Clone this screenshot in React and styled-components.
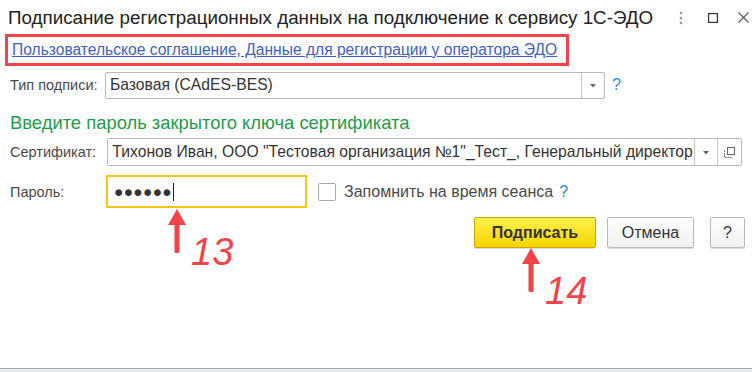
import React from "react";
import styled, { createGlobalStyle } from "styled-components";

const Global = createGlobalStyle`
  html, body { margin: 0; padding: 0; background: #fff; }
  body { font-family: "Liberation Sans", Arial, sans-serif; }
  * { box-sizing: border-box; }
`;

const Window = styled.div`
  position: relative;
  width: 752px;
  height: 372px;
  display: flex;
  flex-direction: column;
  background: #fff;
  overflow: hidden;
`;

const Header = styled.div`
  height: 32px;
  display: flex;
  align-items: center;
  padding: 3px 0 0 8px;
`;

const Title = styled.div`
  flex: 1;
  font-size: 18.8px;
  color: #222;
  white-space: nowrap;
`;

const HeaderIcon = styled.div`
  display: flex;
  align-items: center;
  margin-left: ${(p) => p.$ml}px;
`;

const HeaderIcons = styled.div`
  display: flex;
  align-items: center;
  padding-right: 3px;
`;

const LinkBox = styled.div`
  margin: 2px 0 0 5px;
  width: 564px;
  height: 32px;
  border: 3px solid #f2434b;
  display: flex;
  align-items: center;
  padding-left: 4px;
`;

const Link = styled.a`
  font-size: 15.6px;
  color: #3d5fc4;
  text-decoration: underline;
  white-space: nowrap;
`;

const Body = styled.div`
  display: flex;
  flex-direction: column;
  padding: 0 10px;
`;

const Row = styled.div`
  display: flex;
  align-items: center;
  margin-top: ${(p) => p.$mt || 0}px;
  height: ${(p) => p.$h || 28}px;
`;

const Label = styled.div`
  width: ${(p) => p.$w}px;
  font-size: 14.5px;
  color: #4a4a4a;
  white-space: nowrap;
`;

const Field = styled.div`
  width: ${(p) => p.$w}px;
  height: ${(p) => p.$h || 27}px;
  border: 1px solid #b9b9b9;
  border-radius: 2px;
  display: flex;
  align-items: stretch;
  background: #fff;
`;

const FieldText = styled.div`
  flex: 1;
  min-width: 0;
  display: flex;
  align-items: center;
  padding-left: 4px;
  font-size: 15.7px;
  color: #333;
  white-space: nowrap;
  overflow: hidden;
`;

const FieldButton = styled.div`
  width: ${(p) => p.$w || 23}px;
  flex: none;
  border-left: 1px solid #c8c8c8;
  display: flex;
  align-items: center;
  justify-content: center;
`;

const Help = styled.span`
  color: #2c87d0;
  font-size: 16px;
  margin-left: ${(p) => p.$ml || 7}px;
`;

const Heading = styled.div`
  margin-top: 14px;
  font-size: 18.4px;
  color: #1e9b4b;
  height: 20px;
  display: flex;
  align-items: center;
  white-space: nowrap;
`;

const Password = styled.div`
  width: 201px;
  height: 33px;
  border: 2px solid #f6c617;
  display: flex;
  align-items: center;
  padding-left: 6px;
  font-size: 15.5px;
  color: #333;
  letter-spacing: 0.3px;
`;

const Caret = styled.span`
  display: inline-block;
  width: 1px;
  height: 18px;
  background: #222;
  margin-left: 1px;
`;

const Checkbox = styled.div`
  width: 18px;
  height: 18px;
  border: 1px solid #aaa;
  border-radius: 2px;
  margin-left: 11px;
  background: #fff;
`;

const CheckLabel = styled.span`
  font-size: 16px;
  color: #4a4a4a;
  margin-left: 8px;
  white-space: nowrap;
`;

const Buttons = styled.div`
  display: flex;
  justify-content: flex-end;
  gap: 11px;
  margin-top: 9px;
  padding-right: 7px;
`;

const Button = styled.div`
  height: 31px;
  width: ${(p) => p.$w}px;
  border-radius: 2px;
  display: flex;
  align-items: center;
  justify-content: center;
  font-size: 16px;
  white-space: nowrap;
  color: #333;
  border: 1px solid ${(p) => (p.$primary ? "#c9a600" : "#b9b9b9")};
  background: ${(p) =>
    p.$primary
      ? "linear-gradient(#fff04f, #f4d400)"
      : "linear-gradient(#ffffff, #f0f0f0)"};
  font-weight: ${(p) => (p.$primary ? "bold" : "normal")};
  box-shadow: 0 1px 1px rgba(0, 0, 0, 0.15);
  margin-left: ${(p) => p.$ml || 0}px;
`;

const Spacer = styled.div`
  flex: 1;
`;

const Footer = styled.div`
  height: 4px;
  border-top: 1px solid #a4a4a4;
  background: #e6ebee;
`;

const Annotation = styled.div`
  position: absolute;
  left: ${(p) => p.$x}px;
  top: ${(p) => p.$y}px;
  display: flex;
  align-items: flex-start;
`;

const Number = styled.span`
  font-style: italic;
  font-size: 38px;
  color: #f2434b;
  line-height: 1;
  margin-top: 24px;
  margin-left: 4px;
`;

const Arrow = () => (
  <svg width="20" height="44" viewBox="0 0 20 44">
    <polygon points="10,0 19,16 1,16" fill="#f2434b" />
    <rect x="7.5" y="14" width="5" height="30" rx="1.5" fill="#f2434b" />
  </svg>
);

const DropArrow = () => (
  <svg width="8" height="5" viewBox="0 0 8 5">
    <polygon points="1,1 7,1 4,4.5" fill="#666" />
  </svg>
);

export default function App() {
  return (
    <>
      <Global />
      <Window>
        <Header>
          <Title>Подписание регистрационных данных на подключение к сервису 1С-ЭДО</Title>
          <HeaderIcons>
            <HeaderIcon $ml={0}>
              <svg width="4" height="14" viewBox="0 0 4 14">
                <circle cx="2" cy="2" r="1.3" fill="#999" />
                <circle cx="2" cy="7" r="1.3" fill="#999" />
                <circle cx="2" cy="12" r="1.3" fill="#999" />
              </svg>
            </HeaderIcon>
            <HeaderIcon $ml={25}>
              <svg width="10" height="10" viewBox="0 0 10 10">
                <rect x="0.6" y="0.6" width="8.8" height="8.8" fill="none" stroke="#333" strokeWidth="1.2" />
              </svg>
            </HeaderIcon>
            <HeaderIcon $ml={20}>
              <svg width="11" height="11" viewBox="0 0 11 11">
                <path d="M0.5 0.5 L10.5 10.5 M10.5 0.5 L0.5 10.5" stroke="#555" strokeWidth="1.2" />
              </svg>
            </HeaderIcon>
          </HeaderIcons>
        </Header>
        <LinkBox>
          <Link>Пользовательское соглашение, Данные для регистрации у оператора ЭДО</Link>
        </LinkBox>
        <Body>
          <Row $mt={5}>
            <Label $w={95}>Тип подписи:</Label>
            <Field $w={500}>
              <FieldText>Базовая (CAdES-BES)</FieldText>
              <FieldButton>
                <DropArrow />
              </FieldButton>
            </Field>
            <Help>?</Help>
          </Row>
          <Heading>Введите пароль закрытого ключа сертификата</Heading>
          <Row $mt={5}>
            <Label $w={98}>Сертификат:</Label>
            <Field $w={639} $h={28}>
              <FieldText>Тихонов Иван, ООО "Тестовая организация №1"_Тест_, Генеральный директор</FieldText>
              <FieldButton>
                <DropArrow />
              </FieldButton>
              <FieldButton $w={24}>
                <svg width="11" height="11" viewBox="0 0 11 11">
                  <rect x="3.5" y="0.5" width="7" height="7" fill="none" stroke="#666" strokeWidth="1" />
                  <path d="M0.5 3.5 V10.5 H7.5" fill="none" stroke="#666" strokeWidth="1" strokeDasharray="1.5 1" />
                </svg>
              </FieldButton>
            </Field>
          </Row>
          <Row $mt={9} $h={33}>
            <Label $w={96}>Пароль:</Label>
            <Password>
              ●●●●●●
              <Caret />
            </Password>
            <Checkbox />
            <CheckLabel>Запомнить на время сеанса</CheckLabel>
            <Help $ml={6}>?</Help>
          </Row>
        </Body>
        <Buttons>
          <Button $primary $w={122}>Подписать</Button>
          <Button $w={87}>Отмена</Button>
          <Button $w={35} $ml={5}>?</Button>
        </Buttons>
        <Spacer />
        <Footer />
        <Annotation $x={167} $y={209}>
          <Arrow />
          <Number>13</Number>
        </Annotation>
        <Annotation $x={521} $y={248}>
          <Arrow />
          <Number>14</Number>
        </Annotation>
      </Window>
    </>
  );
}
